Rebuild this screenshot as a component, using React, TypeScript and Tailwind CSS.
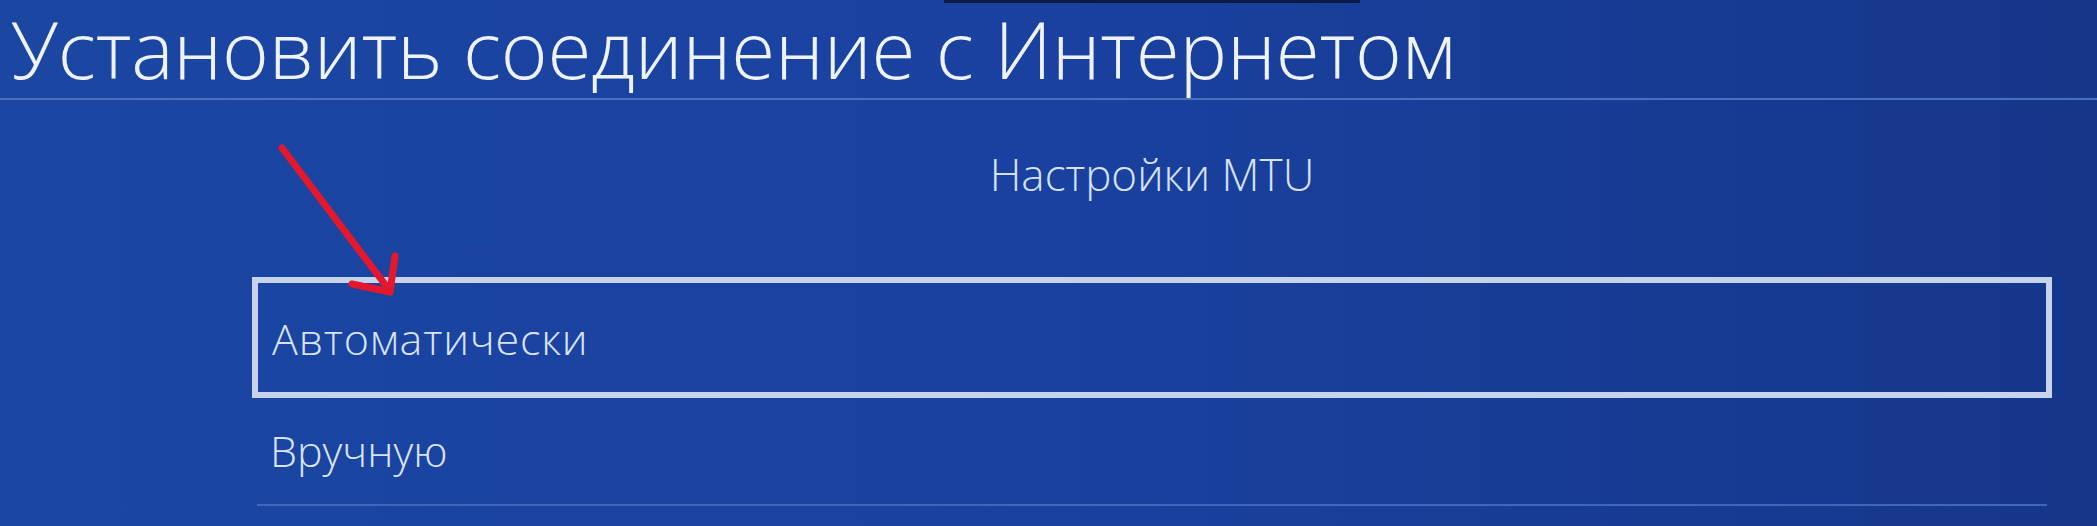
import React from "react";

const font = { fontFamily: '"Open Sans", "Noto Sans", sans-serif' };

const RedArrow = () => (
  <svg
    className="absolute left-[270px] top-[135px] pointer-events-none"
    width="150"
    height="175"
    viewBox="270 135 150 175"
  >
    <g stroke="#e5172d" strokeWidth="7" strokeLinecap="round" fill="none">
      <line x1="282" y1="148" x2="390" y2="291" />
      <line x1="390" y1="292" x2="395" y2="256" />
      <line x1="390" y1="292" x2="352" y2="284" />
    </g>
  </svg>
);

export default function App() {
  return (
    <div
      className="relative w-[2097px] h-[526px] overflow-hidden bg-gradient-to-r from-[#1b46a2] via-[#1a41a0] to-[#15378a] text-[#e6edf8]"
      style={font}
    >
      <div className="absolute left-[944px] top-0 w-[416px] h-[3px] bg-[#0c1a48]" />
      <div className="h-[100px] border-b-2 border-[#4b70c0] flex items-end">
        <h1 className="pl-[11px] pb-[4px] text-[80px] leading-[92px] font-light tracking-[-0.2px] text-[#eef3fb] whitespace-nowrap">
          Установить соединение с Интернетом
        </h1>
      </div>

      <div className="ml-[252px] w-[1800px] flex flex-col">
        <div className="h-[177px] flex justify-center pt-[44px]">
          <span className="text-[44px] leading-[60px] font-light text-[#d5e1f4]">
            Настройки MTU
          </span>
        </div>
        <div className="h-[121px] border-[6px] border-[#c6d3ec] flex items-center pl-[14px]">
          <span className="text-[43px] leading-[56px] font-light tracking-[0.8px] text-[#d8e3f5] mt-[2px]">
            Автоматически
          </span>
        </div>
        <div className="h-[108px] border-b-2 border-[#4168b8] flex items-center pl-[13px] ml-[5px] mr-[5px]">
          <span className="text-[43px] leading-[56px] font-light text-[#d8e3f5]">
            Вручную
          </span>
        </div>
      </div>

      <RedArrow />
    </div>
  );
}
